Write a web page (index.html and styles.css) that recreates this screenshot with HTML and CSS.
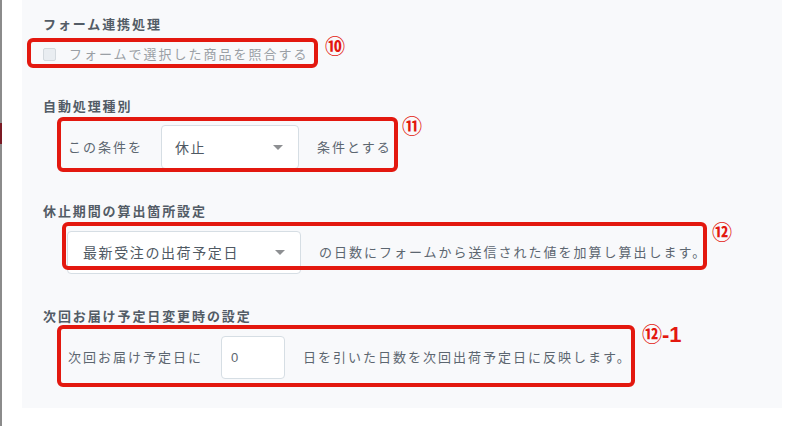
FILE: index.html
```html
<!DOCTYPE html>
<html lang="ja">
<head>
<meta charset="utf-8">
<link rel="stylesheet" href="styles.css">
</head>
<body>
<div class="rail"><span class="rail-mark"></span></div>
<div class="gutter"></div>
<main class="panel">
  <section class="sec sec-first">
    <h3 class="sec-title">フォーム連携処理</h3>
    <label class="check-row">
      <span class="checkbox"></span>
      <span class="check-label">フォームで選択した商品を照合する</span>
    </label>
  </section>

  <section class="sec">
    <h3 class="sec-title">自動処理種別</h3>
    <div class="row">
      <span class="txt">この条件を</span>
      <div class="select sel-a"><span>休止</span><i class="caret"></i></div>
      <span class="txt">条件とする</span>
    </div>
  </section>

  <section class="sec">
    <h3 class="sec-title">休止期間の算出箇所設定</h3>
    <div class="row row-tight">
      <div class="select sel-b"><span>最新受注の出荷予定日</span><i class="caret"></i></div>
      <span class="txt">の日数にフォームから送信された値を加算し算出します。</span>
    </div>
  </section>

  <section class="sec">
    <h3 class="sec-title">次回お届け予定日変更時の設定</h3>
    <div class="row">
      <span class="txt">次回お届け予定日に</span>
      <div class="num-input">0</div>
      <span class="txt">日を引いた日数を次回出荷予定日に反映します。</span>
    </div>
  </section>

  <div class="mark box1"></div>
  <div class="mark box2"></div>
  <div class="mark box3"></div>
  <div class="mark box4"></div>
  <span class="note n10">⑩</span>
  <span class="note n11">⑪</span>
  <span class="note n12">⑫</span>
  <span class="note n121">⑫<b>-1</b></span>
</main>
</body>
</html>
```

FILE: styles.css
```css
* { box-sizing: border-box; }
html, body { margin: 0; padding: 0; background: #fff; }
body {
  display: flex;
  align-items: flex-start;
  width: 802px;
  height: 426px;
  overflow: hidden;
  font-family: "Noto Sans CJK JP", "Noto Sans", sans-serif;
  font-size: 13px;
  letter-spacing: 2px;
  color: #5c6670;
}
.rail {
  width: 2px;
  height: 426px;
  background: #8b8b8b;
  position: relative;
  flex: none;
}
.rail-mark {
  position: absolute;
  left: 0;
  top: 123px;
  width: 2px;
  height: 21px;
  background: #7a1a24;
}
.gutter { width: 20px; flex: none; }
.panel {
  position: relative;
  width: 760px;
  height: 408px;
  background: #f8f9fb;
  padding: 14px 0 0 21px;
  flex: none;
}
.sec { margin-top: 32px; }
.sec-first { margin-top: 0; }
.sec-title {
  margin: 0;
  font-size: 13px;
  line-height: 20px;
  font-weight: 700;
  color: #535c66;
  letter-spacing: 1.9px;
}
.check-row {
  display: flex;
  align-items: center;
  gap: 13px;
  margin-top: 10px;
  height: 20px;
}
.checkbox {
  width: 13px;
  height: 13px;
  border: 1px solid #d3d9de;
  border-radius: 2px;
  background: #e9edf1;
  flex: none;
}
.check-label { color: #9a9fa5; line-height: 20px; }
.row {
  display: flex;
  align-items: center;
  gap: 18px;
  margin-top: 9px;
  padding-left: 25px;
  height: 44px;
}
.row-tight { padding-left: 24px; }
.txt { white-space: nowrap; line-height: 20px; }
.select {
  display: flex;
  align-items: center;
  justify-content: space-between;
  height: 44px;
  background: #fff;
  border: 1px solid #d6dee4;
  border-radius: 4px;
  font-size: 14px;
  letter-spacing: 1.6px;
  color: #4f5963;
  flex: none;
}
.sel-a { width: 138px; padding: 0 15px 0 13px; }
.sel-b { width: 234px; height: 43px; padding: 0 15px 0 15px; }
.caret {
  width: 0;
  height: 0;
  border-left: 5px solid transparent;
  border-right: 5px solid transparent;
  border-top: 5px solid #8d8f92;
}
.num-input {
  width: 64px;
  height: 43px;
  background: #fff;
  border: 1px solid #d6dee4;
  border-radius: 4px;
  padding-left: 9px;
  display: flex;
  align-items: center;
  font-family: "Liberation Sans", sans-serif;
  font-size: 13px;
  color: #5c6670;
  flex: none;
}
.mark {
  position: absolute;
  border: 4px solid #e3180f;
  border-radius: 6px;
}
.box1 { left: 5px; top: 38px; width: 291px; height: 30px; }
.box2 { left: 35px; top: 117px; width: 341px; height: 55px; }
.box3 { left: 40px; top: 222px; width: 645px; height: 48px; }
.box4 { left: 35px; top: 325px; width: 578px; height: 62px; }
.note {
  position: absolute;
  color: #e3180f;
  font-size: 20px;
  line-height: 20px;
  font-weight: 700;
  letter-spacing: 0;
  white-space: nowrap;
}
.note b {
  font-family: "Liberation Sans", Arial, sans-serif;
  font-size: 22px;
  font-weight: 700;
}
.n10 { left: 303px; top: 36px; }
.n11 { left: 380px; top: 116px; }
.n12 { left: 690px; top: 222px; }
.n121 { left: 620px; top: 324px; }
```
